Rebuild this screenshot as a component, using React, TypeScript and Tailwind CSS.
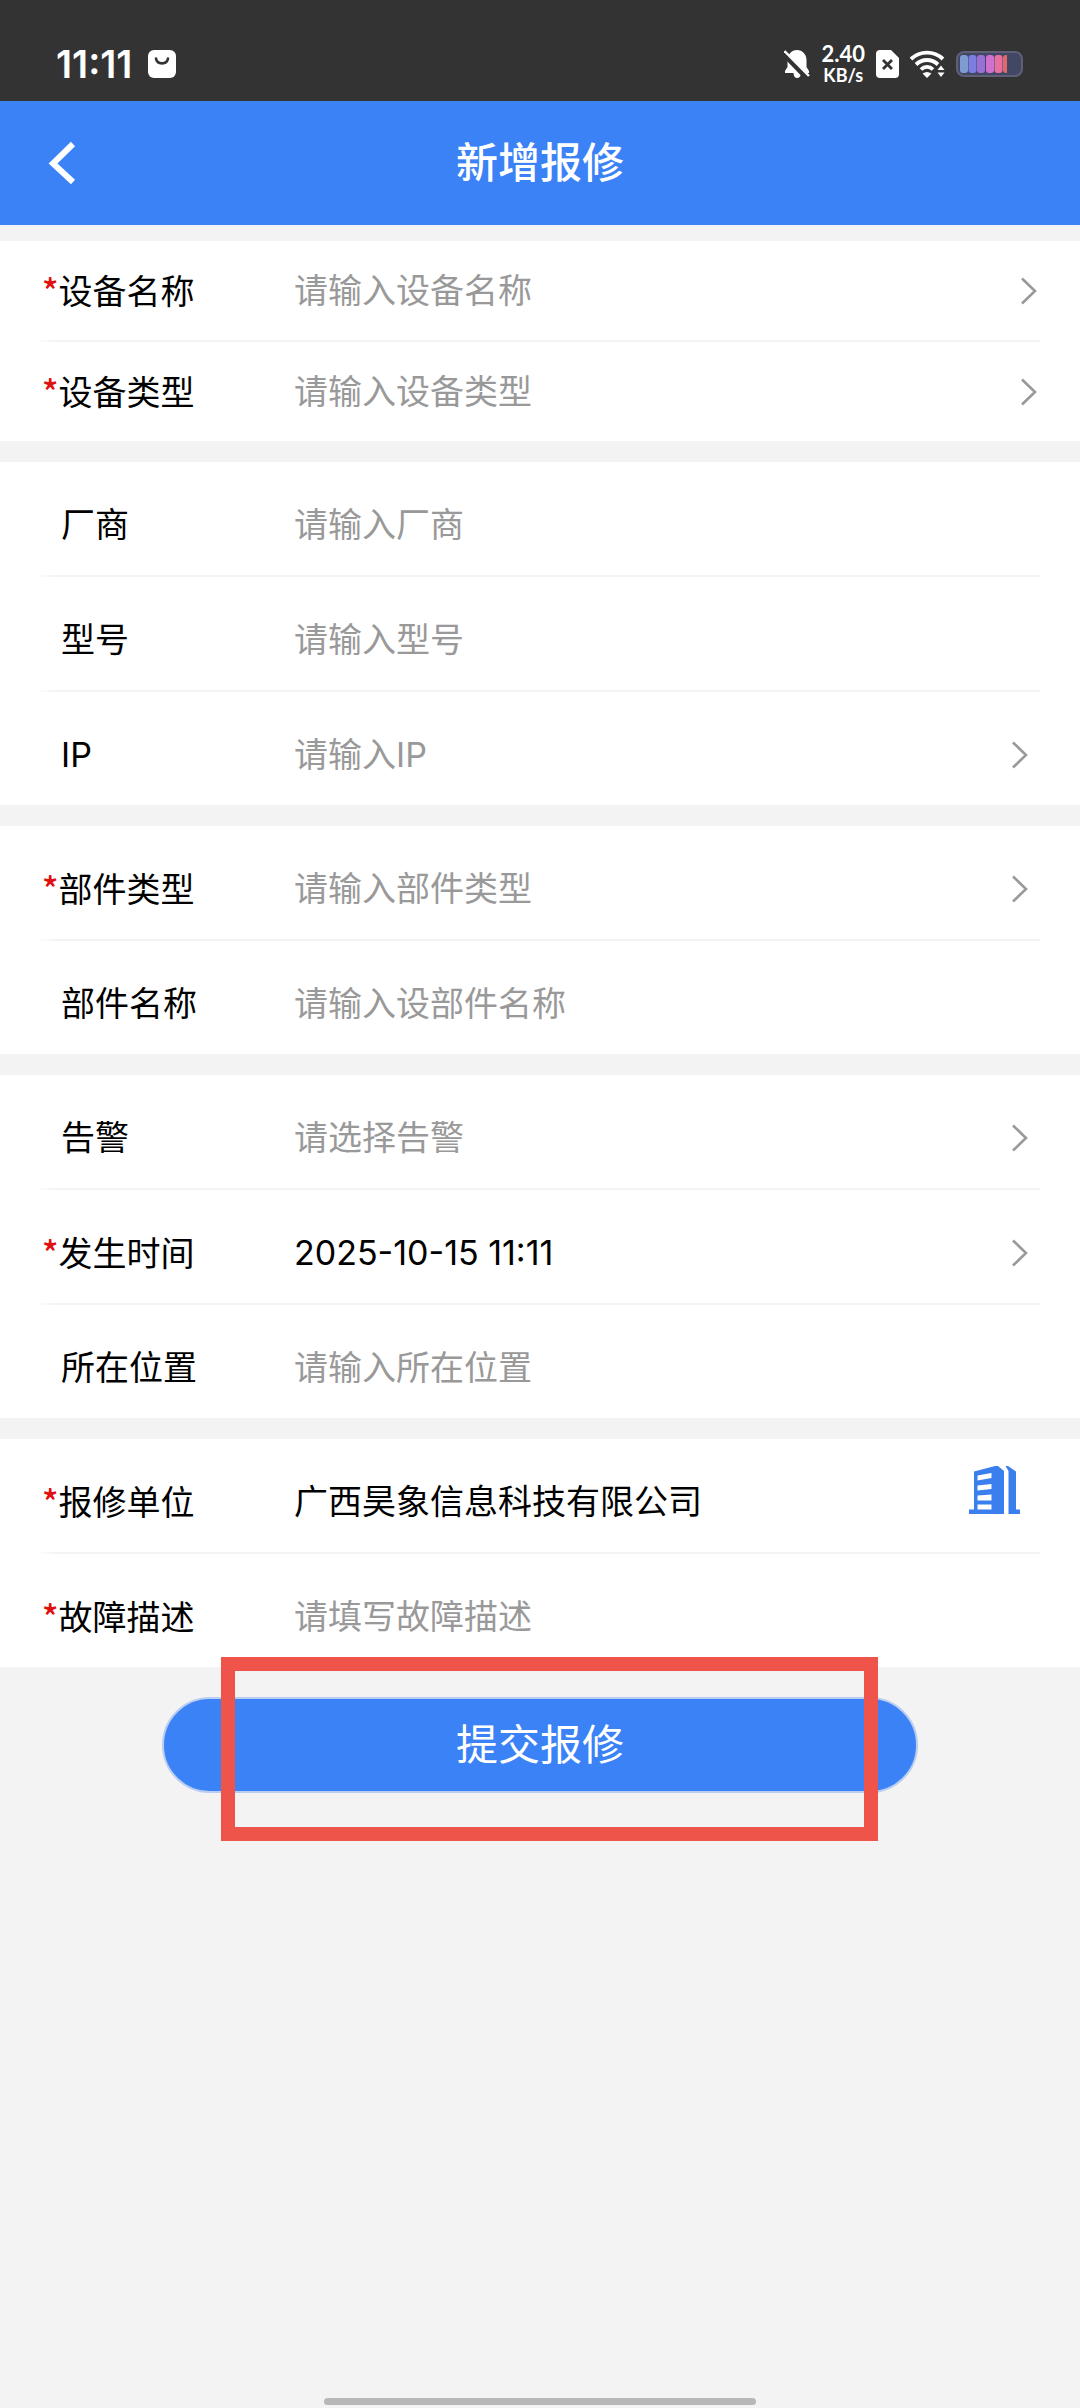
import { useState } from "react";

type Field = {
  id: string;
  label: string;
  placeholder?: string;
  value?: string;
  required?: boolean;
  action?: "arrow" | "building";
};

type Group = {
  compact?: boolean;
  fields: Field[];
};

const groups: Group[] = [
  {
    compact: true,
    fields: [
      { id: "deviceName", label: "设备名称", placeholder: "请输入设备名称", required: true, action: "arrow" },
      { id: "deviceType", label: "设备类型", placeholder: "请输入设备类型", required: true, action: "arrow" },
    ],
  },
  {
    fields: [
      { id: "vendor", label: "厂商", placeholder: "请输入厂商" },
      { id: "model", label: "型号", placeholder: "请输入型号" },
      { id: "ip", label: "IP", placeholder: "请输入IP", action: "arrow" },
    ],
  },
  {
    fields: [
      { id: "partType", label: "部件类型", placeholder: "请输入部件类型", required: true, action: "arrow" },
      { id: "partName", label: "部件名称", placeholder: "请输入设部件名称" },
    ],
  },
  {
    fields: [
      { id: "alarm", label: "告警", placeholder: "请选择告警", action: "arrow" },
      { id: "time", label: "发生时间", value: "2025-10-15 11:11", required: true, action: "arrow" },
      { id: "location", label: "所在位置", placeholder: "请输入所在位置" },
    ],
  },
  {
    fields: [
      { id: "company", label: "报修单位", value: "广西昊象信息科技有限公司", required: true, action: "building" },
      { id: "description", label: "故障描述", placeholder: "请填写故障描述", required: true },
    ],
  },
];

const ArrowIcon = () => (
  <svg width="16" height="28" viewBox="0 0 16 28" fill="none" stroke="#999" strokeWidth="2.6">
    <path d="M1 1.5 14 14 1 26.5" />
  </svg>
);

const BuildingIcon = () => (
  <svg width="51" height="48" viewBox="0 0 51 48" fill="#3b7eee">
    <path
      fillRule="evenodd"
      d="M0 48V43.5H5V5.5L26 0H29L35 5V48ZM8.500 9.500V14.500L22.500 12V7ZM8.500 19.500V24.500L22.500 23V18ZM8.500 29.500V34.500H22.500V28.500ZM8.500 38.500V43.500H22.500V38.500Z"
    />
    <path d="M36.500 0H39L47 5.500V43.500H51V48H39.500V5Z" />
  </svg>
);

const StatusBar = () => (
  <div className="flex h-[101px] items-center justify-between bg-[#333] pt-[27px] pr-[57px] pl-[56px] text-white">
    <div className="flex items-center gap-4">
      <span className="text-[38px] leading-none font-semibold">11:11</span>
      <svg width="28" height="28" viewBox="0 0 28 28">
        <rect width="28" height="28" rx="6" fill="#fff" />
        <path d="M8 8.500c1 6.500 11 6.500 12 0" fill="none" stroke="#333" strokeWidth="2.600" strokeLinecap="round" />
      </svg>
    </div>

    <div className="flex items-center gap-[11px]">
      <svg width="26" height="28" viewBox="0 0 26 28">
        <path
          fill="#fff"
          d="M13 0C7.500 0 3.500 4.500 3.500 10V17L1 21V23H9.500C9.500 26 11 28 13.200 28S17 26 17 23H25V21L22.500 17V10C22.500 4.500 18.500 0 13 0Z"
        />
        <path d="M-1.500 2 24 28.500" stroke="#333" strokeWidth="6" />
        <path d="M.5 1 25 26" stroke="#fff" strokeWidth="2.400" />
      </svg>
      <div className="flex flex-col items-center font-[Lato] font-bold">
        <span className="text-[22px] leading-[22px]">2.40</span>
        <span className="text-[18px] leading-[20px]">KB/s</span>
      </div>
      <svg width="23" height="28" viewBox="0 0 23 28">
        <path d="M4 0H15L23 8V24a4 4 0 0 1-4 4H4a4 4 0 0 1-4-4V4a4 4 0 0 1 4-4Z" fill="#fff" />
        <path d="M7 10 16 19M16 10 7 19" stroke="#333" strokeWidth="2.800" />
      </svg>
      <svg width="35" height="28" viewBox="0 0 35 28">
        <g fill="none" stroke="#fff" strokeWidth="3.800">
          <path d="M1 9C10 .5 24 .5 33 9" />
          <path d="M6 14.500C12.500 8.500 21.500 8.500 28 14.500" />
          <path d="M11 19.500C14.500 16 19.500 16 23 19.500" />
        </g>
        <path d="M12.500 23.500Q17 20.500 21.500 23.500L17 28Z" fill="#fff" />
        <path d="M27.500 20 31 15.500 34.500 20ZM27.500 22.500H34.500L31 27Z" fill="#fff" />
      </svg>
      <svg width="67" height="26" viewBox="0 0 67 26">
        <rect x="1" y="1" width="65" height="24" rx="7" fill="#424763" stroke="#5f5f78" strokeWidth="2" />
        <rect x="4" y="4" width="8" height="18" rx="3" fill="#7f9bd0" />
        <rect x="12.500" y="4" width="8" height="18" rx="3" fill="#7b7ee0" />
        <rect x="21" y="4" width="8" height="18" rx="3" fill="#9a70d6" />
        <rect x="30" y="4" width="8" height="18" rx="3" fill="#cf72cf" />
        <rect x="38.500" y="4" width="8" height="18" rx="3" fill="#e6709f" />
        <path d="M51 4V22H50a3 3 0 0 1-3-3V7a3 3 0 0 1 3-3Z" fill="#e2686e" />
      </svg>
    </div>
  </div>
);

const App = () => {
  const [values, setValues] = useState<Record<string, string>>(() =>
    Object.fromEntries(groups.flatMap((g) => g.fields).map((f) => [f.id, f.value ?? ""]))
  );

  return (
    <div className="flex min-h-screen flex-col bg-[#f3f3f3] font-[Inter,'Noto_Sans_CJK_SC',sans-serif] text-black">
      <StatusBar />

      <header className="grid h-[124px] grid-cols-[1fr_auto_1fr] items-center bg-[#3b82f6] px-12 text-white">
        <button type="button" aria-label="返回" className="justify-self-start">
          <svg width="28" height="44" viewBox="0 0 28 44" fill="none" stroke="#fff" strokeWidth="6">
            <path d="M25 3 5 22.500 25 41" />
          </svg>
        </button>
        <h1 className="text-[42px] leading-none font-medium">新增报修</h1>
      </header>

      <form className="mt-4" onSubmit={(e) => e.preventDefault()}>
        <div className="flex flex-col gap-[21px]">
          {groups.map(({ compact, fields }, index) => (
            <section key={index} className="bg-white">
              {fields.map(({ id, label, placeholder, required, action }, i) => (
                <div key={id}>
                  {i > 0 && (
                    <div className="mr-10 ml-9 h-[2px] bg-linear-to-r from-white via-[#f3f3f3] from-0% via-2% to-[#f3f3f3]" />
                  )}
                  <div
                    className={
                      compact
                        ? "flex h-[99px] items-center pr-[43px] pl-[42px]"
                        : "flex h-[113px] items-center pt-3 pr-[52px] pl-[42px]"
                    }
                  >
                    <label
                      htmlFor={id}
                      className={
                        required
                          ? "w-[252px] shrink-0 text-[34px] leading-[48px]"
                          : "w-[252px] shrink-0 pl-[19px] text-[34px] leading-[48px]"
                      }
                    >
                      {required && <span className="font-['Noto_Sans_CJK_SC'] font-medium text-[#e01010]">*</span>}
                      {label}
                    </label>
                    <input
                      id={id}
                      type="text"
                      value={values[id]}
                      placeholder={placeholder}
                      onChange={(e) => setValues({ ...values, [id]: e.target.value })}
                      className="h-12 min-w-0 flex-1 bg-transparent text-[34px] outline-none placeholder:text-[#999]"
                    />
                    {action === "arrow" && (
                      <button type="button" aria-label={label}>
                        <ArrowIcon />
                      </button>
                    )}
                    {action === "building" && (
                      <button type="button" aria-label={label} className="mr-2 pb-6">
                        <BuildingIcon />
                      </button>
                    )}
                  </div>
                </div>
              ))}
            </section>
          ))}
        </div>

        <div className="relative mx-auto mt-[30px] w-[70%]">
          <button
            type="submit"
            className="h-24 w-full rounded-full border-2 border-[#b9cdf0] bg-[#3b82f6] text-[42px] leading-none text-white"
          >
            提交报修
          </button>
          {/* highlight frame around the submit button */}
          <div className="pointer-events-none absolute -top-10 right-10 -bottom-12 left-[59px] border-[14px] border-[#ef544b]" />
        </div>
      </form>

      <div className="mx-auto mt-auto mb-[3px] h-[7px] w-2/5 rounded-full bg-[#b8b8b8]" />
    </div>
  );
};

export default App;
